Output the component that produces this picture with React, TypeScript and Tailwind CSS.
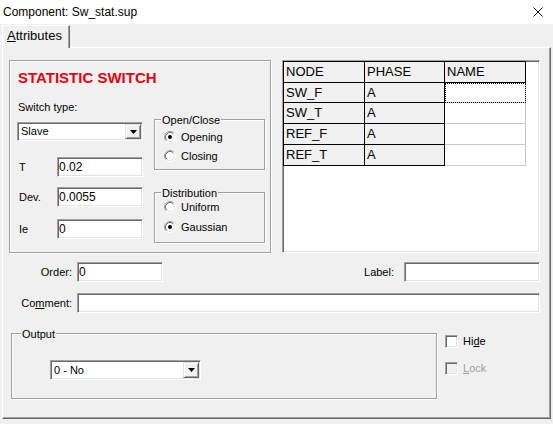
import React from "react";

// classic win32 bevels
const sunken =
  "border border-t-[#a0a0a0] border-l-[#a0a0a0] border-r-white border-b-white shadow-[inset_1px_1px_0_#696969,inset_-1px_-1px_0_#e3e3e3]";
const raised =
  "border border-t-[#e3e3e3] border-l-[#e3e3e3] border-r-[#696969] border-b-[#696969] shadow-[inset_1px_1px_0_#fff,inset_-1px_-1px_0_#a0a0a0]";
const etched = "border border-[#a0a0a0] shadow-[inset_1px_1px_0_#fff,1px_1px_0_#fff]";

const Group: React.FC<{ legend: string; legendLeft?: string; className?: string; children?: React.ReactNode }> = ({
  legend,
  legendLeft = "left-[6px]",
  className = "",
  children,
}) => (
  <div className={`relative ${etched} ${className}`}>
    <span className={`absolute top-[-6px] ${legendLeft} bg-[#f0f0f0] px-[1px] text-[11px] leading-[12px]`}>
      {legend}
    </span>
    {children}
  </div>
);

const Radio: React.FC<{ checked?: boolean; label: string }> = ({ checked, label }) => (
  <div className="flex items-center h-[16px] gap-[5px]">
    <svg width="12" height="12" viewBox="0 0 12 12">
      <circle cx="6" cy="6" r="5" fill="#fff" />
      <path d="M2.11 9.89 A5.5 5.5 0 0 1 9.89 2.11" stroke="#a0a0a0" fill="none" />
      <path d="M2.82 9.18 A4.5 4.5 0 0 1 9.18 2.82" stroke="#696969" fill="none" />
      <path d="M9.89 2.11 A5.5 5.5 0 0 1 2.11 9.89" stroke="#fff" fill="none" />
      <path d="M9.18 2.82 A4.5 4.5 0 0 1 2.82 9.18" stroke="#e3e3e3" fill="none" />
      {checked && <circle cx="6" cy="6" r="2" fill="#000" />}
    </svg>
    <span className="text-[11px] leading-[14px]">{label}</span>
  </div>
);

const Select: React.FC<{ value: string; className?: string }> = ({ value, className = "" }) => (
  <div className={`${sunken} bg-white flex items-stretch p-[1px] ${className}`}>
    <span className="flex-1 pl-[2px] text-[11px] leading-[15px] flex items-center">{value}</span>
    <div className={`${raised} w-[16px] bg-[#f0f0f0] flex items-center justify-center`}>
      <svg width="7" height="4" viewBox="0 0 7 4">
        <polygon points="0,0 7,0 3.5,4" fill="#000" />
      </svg>
    </div>
  </div>
);

const Input: React.FC<{ value?: string; className?: string }> = ({ value = "", className = "" }) => (
  <div className={`${sunken} bg-white pl-[1px] text-[12px] flex items-center ${className}`}>{value}</div>
);

const Field: React.FC<{ label: string; value: string; className?: string }> = ({ label, value, className = "" }) => (
  <div className={`flex items-center h-[20px] ${className}`}>
    <span className="w-[40px] pl-[2px] text-[11px]">{label}</span>
    <Input value={value} className="w-[86px] h-[20px]" />
  </div>
);

const CheckBox: React.FC<{ disabled?: boolean; children: React.ReactNode; className?: string }> = ({
  disabled,
  children,
  className = "",
}) => (
  <div className={`flex items-center gap-[5px] h-[13px] ${className}`}>
    <div className={`w-[13px] h-[13px] ${sunken} ${disabled ? "bg-[#f0f0f0]" : "bg-white"}`} />
    <span className={`text-[11px] ${disabled ? "text-[#a0a0a0]" : ""}`}>{children}</span>
  </div>
);

const rows = [
  { node: "SW_F", phase: "A", h: "h-[20px]", focus: true },
  { node: "SW_T", phase: "A", h: "h-[21px]" },
  { node: "REF_F", phase: "A", h: "h-[21px]" },
  { node: "REF_T", phase: "A", h: "h-[21px]" },
];

const fixedCell = "border-r border-b border-black bg-[#f0f0f0] pl-[2px] flex items-center";

export default function App() {
  return (
    <div className="w-[553px] h-[424px] bg-[#f0f0f0] overflow-hidden flex flex-col text-black font-['Liberation_Sans',Arial,sans-serif]">
      {/* title bar */}
      <div className="h-[24px] bg-white flex items-center justify-between pl-[3px] pr-[10px] pb-[1px]">
        <span className="text-[12px]">Component: Sw_stat.sup</span>
        <svg width="10" height="10" viewBox="0 0 10 10">
          <path d="M0.5 0.5 L9.5 9.5 M9.5 0.5 L0.5 9.5" stroke="#111" strokeWidth="1" />
        </svg>
      </div>

      {/* tabs */}
      <div className="h-[23px] flex items-end pl-[2px]">
        <div className="relative z-10 -mb-[1px] h-[23px] w-[68px] bg-[#f0f0f0] border-t border-l border-white border-r border-r-[#696969] shadow-[inset_-1px_0_0_#a0a0a0] pl-[4px] pb-[2px] flex items-center text-[13px]">
          <span>
            <span className="underline">A</span>ttributes
          </span>
        </div>
      </div>

      {/* tab page */}
      <div className="ml-[2px] w-[549px] h-[372px] border border-t-white border-l-white border-r-[#696969] border-b-[#696969] shadow-[inset_-1px_-1px_0_#a0a0a0] flex flex-col">
        <div className="mt-[12px] ml-[6px] flex gap-[11px]">
          {/* statistic switch */}
          <div className={`w-[262px] h-[193px] ${etched}`}>
            <div className="mt-[8px] ml-[8px] h-[18px] leading-[18px] text-[15px] font-bold text-[#e60012]">
              STATISTIC SWITCH
            </div>
            <div className="mt-[13px] ml-[7px] flex gap-[11px]">
              <div className="w-[126px] flex flex-col">
                <span className="h-[14px] leading-[14px] text-[11px] pl-[1px]">Switch type:</span>
                <Select value="Slave" className="mt-[8px] h-[19px]" />
                <Field label="T" value="0.02" className="mt-[16px]" />
                <Field label="Dev." value="0.0055" className="mt-[10px]" />
                <Field label="Ie" value="0" className="mt-[12px]" />
              </div>
              <div className="w-[111px] pt-[19px] flex flex-col">
                <Group legend="Open/Close" className="h-[51px]">
                  <div className="pt-[9px] pl-[9px] flex flex-col gap-[3px]">
                    <Radio checked label="Opening" />
                    <Radio label="Closing" />
                  </div>
                </Group>
                <Group legend="Distribution" className="mt-[22px] h-[51px]">
                  <div className="pt-[6px] pl-[9px] flex flex-col gap-[4px]">
                    <Radio label="Uniform" />
                    <Radio checked label="Gaussian" />
                  </div>
                </Group>
              </div>
            </div>
          </div>

          {/* node grid */}
          <div className="w-[258px] h-[193px] bg-white border border-t-[#a0a0a0] border-l-[#a0a0a0] border-r-white border-b-white shadow-[inset_1px_1px_0_#696969,inset_-1px_-1px_0_#e3e3e3]">
            <div className="w-[243px] border-t border-l border-black text-[13px]">
              <div className="flex h-[21px]">
                <div className={`w-[81px] ${fixedCell}`}>NODE</div>
                <div className={`w-[80px] ${fixedCell}`}>PHASE</div>
                <div className={`w-[81px] ${fixedCell}`}>NAME</div>
              </div>
              {rows.map((r) => (
                <div key={r.node} className={`flex ${r.h}`}>
                  <div className={`w-[81px] ${fixedCell}`}>{r.node}</div>
                  <div className={`w-[80px] ${fixedCell}`}>{r.phase}</div>
                  <div
                    className={`w-[81px] bg-white border-r border-b border-[#c8c8c8] ${
                      r.focus ? "outline-1 outline-dotted outline-black outline-offset-[-1px]" : ""
                    }`}
                  />
                </div>
              ))}
            </div>
          </div>
        </div>

        {/* order / label */}
        <div className="mt-[9px] flex items-center h-[20px]">
          <span className="w-[69px] text-right text-[11px]">Order:</span>
          <Input value="0" className="ml-[5px] w-[86px] h-[20px]" />
          <span className="ml-auto text-[11px]">Label:</span>
          <Input className="ml-[10px] w-[136px] h-[20px] mr-[10px]" />
        </div>

        {/* comment */}
        <div className="mt-[11px] flex items-center h-[20px]">
          <span className="w-[69px] text-right text-[11px]">
            Co<span className="underline">m</span>ment:
          </span>
          <Input className="ml-[5px] flex-1 h-[20px] mr-[10px]" />
        </div>

        {/* output */}
        <div className="mt-[20px] flex">
          <Group legend="Output" legendLeft="left-[9px]" className="ml-[8px] w-[426px] h-[66px]">
            <div className="pt-[26px] pl-[38px]">
              <Select value="0 - No" className="w-[151px] h-[20px]" />
            </div>
          </Group>
          <div className="ml-[8px] flex flex-col">
            <CheckBox className="mt-[2px]">
              Hi<span className="underline">d</span>e
            </CheckBox>
            <CheckBox disabled className="mt-[14px]">
              <span className="underline">L</span>ock
            </CheckBox>
          </div>
        </div>
      </div>
    </div>
  );
}
